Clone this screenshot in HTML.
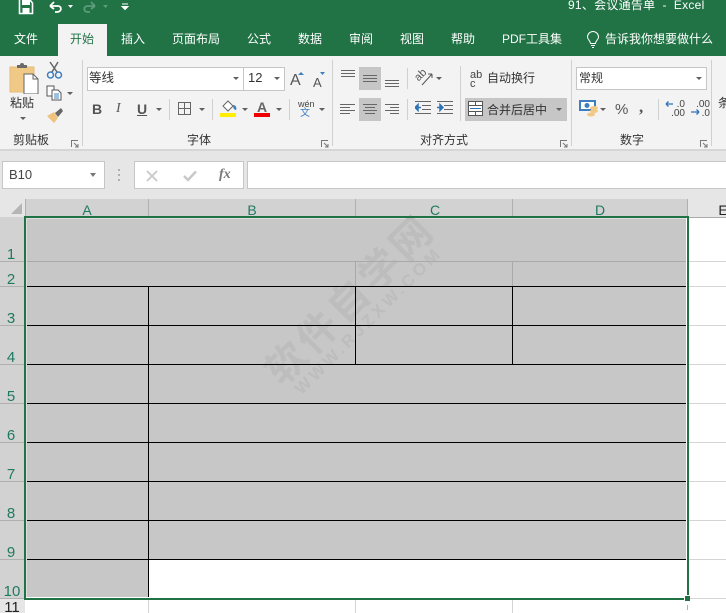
<!DOCTYPE html>
<html><head><meta charset="utf-8">
<style>
html,body{margin:0;padding:0;width:726px;height:613px;overflow:hidden;background:#fff}
body{position:relative;font-family:"Liberation Sans","Noto Sans CJK SC",sans-serif;color:#333}
div,span,svg{position:absolute}
.t{white-space:nowrap;line-height:1}
.tab{top:32px;font-size:12px;color:#fff;white-space:nowrap;line-height:14px}
.arr{width:0;height:0;border-left:3px solid transparent;border-right:3px solid transparent;border-top:3px solid #5f5f5f}
.sep{width:1px;background:#d0d0d0}
.gl{font-size:12px;color:#333;white-space:nowrap;line-height:14px}
.hd{font-size:15px;color:#1f7a60;line-height:16px;text-align:center;white-space:nowrap}
.k{background:#000}
</style></head>
<body>
<!-- title bar -->
<div style="left:0;top:0;width:726px;height:56px;background:#217346"></div>
<svg style="left:18px;top:0" width="120" height="16" viewBox="0 0 120 16" fill="none">
<path d="M1.500 0V13.500H14.500V3L12 0" stroke="#fff" stroke-width="1.600"/><rect x="4" y="0" width="8" height="5" fill="#fff"/><rect x="4.500" y="8" width="7" height="5" fill="#fff"/>
<path d="M32 6L36 2M32 6L36 9M32 6H40C44 6 44 12 39 12H37" stroke="#fff" stroke-width="1.800"/>
<path d="M50 5H55L52.500 8Z" fill="#fff"/>
<path d="M77 6L73 2M77 6L73 9M77 6H70C65 6 65 12 70 12H72" stroke="#5d9c7c" stroke-width="1.800"/>
<path d="M85 5H90L87.500 8Z" fill="#5d9c7c"/>
<path d="M104 4H110M104 6.500H110L107 9.500Z" stroke="#fff" stroke-width="1" fill="#fff"/>
</svg>
<div class="t" style="left:568px;top:-1px;font-size:12px;color:#fff;line-height:13px;letter-spacing:.25px">91、会议通告单&nbsp; -&nbsp; Excel</div>
<div style="left:58px;top:24px;width:49px;height:32px;background:#f3f3f3"></div>
<div class="tab" style="left:14px">文件</div>
<div class="tab" style="left:70px;color:#217346">开始</div>
<div class="tab" style="left:121px">插入</div>
<div class="tab" style="left:172px">页面布局</div>
<div class="tab" style="left:247px">公式</div>
<div class="tab" style="left:298px">数据</div>
<div class="tab" style="left:349px">审阅</div>
<div class="tab" style="left:400px">视图</div>
<div class="tab" style="left:451px">帮助</div>
<div class="tab" style="left:502px">PDF工具集</div>
<svg style="left:586px;top:31px" width="14" height="18" viewBox="0 0 14 18" fill="none" stroke="#fff" stroke-width="1"><path d="M4.500 12.500C4.500 9.500 1.500 9 1.500 6A5.500 5.500 0 0 1 12.500 6C12.500 9 9.500 9.500 9.500 12.500ZM5 14.500H9M6 16.500H8"/></svg>
<div class="tab" style="left:605px">告诉我你想要做什么</div>

<!-- ribbon -->
<div style="left:0;top:56px;width:726px;height:93px;background:#f3f3f3"></div>
<div style="left:0;top:149px;width:726px;height:2px;background:#d6d6d6"></div>
<div class="sep" style="left:82px;top:60px;height:86px"></div>
<div class="sep" style="left:332px;top:60px;height:86px"></div>
<div class="sep" style="left:571px;top:60px;height:86px"></div>
<div class="sep" style="left:711px;top:60px;height:86px"></div>

<!-- clipboard -->
<svg style="left:9px;top:62px" width="32" height="32" viewBox="0 0 32 32">
<path d="M1 5H25V30H1Z" fill="#f0c987" stroke="#e6bb75" stroke-width="1"/>
<path d="M8 6V3H11A2 2 0 0 1 15 3H18V6Z" fill="#6a6a6a"/>
<path d="M15 12H24L29 17V32H15Z" fill="#fff" stroke="#666" stroke-width="1"/><path d="M24 12V17H29" fill="none" stroke="#666"/>
</svg>
<div class="t" style="left:10px;top:96px;font-size:12px;line-height:14px">粘贴</div>
<div class="arr" style="left:20px;top:117px"></div>
<svg style="left:46px;top:61px" width="18" height="18" viewBox="0 0 18 18" fill="none"><path d="M4 1L11 11M12 1L6 11" stroke="#666" stroke-width="1.500"/><circle cx="4.500" cy="14" r="3" stroke="#3f7fbf" stroke-width="1.500"/><circle cx="12.500" cy="14" r="3" stroke="#3f7fbf" stroke-width="1.500"/></svg>
<svg style="left:46px;top:85px" width="16" height="16" viewBox="0 0 16 16" fill="#fff" stroke="#555" stroke-width="1"><path d="M1 1H8V11H1Z"/><path d="M6 5H12L15 8V15H6Z"/><path d="M8 9H13M8 11H13M8 13H13" stroke="#3f7fbf"/></svg>
<div class="arr" style="left:67px;top:92px"></div>
<svg style="left:46px;top:108px" width="18" height="16" viewBox="0 0 18 16"><path d="M1 8L8 4L12 10L8 15Z" fill="#efc27e"/><path d="M9 5L15 0L17 3L12 9Z" fill="#666"/></svg>
<div class="gl" style="left:13px;top:133px">剪贴板</div>
<svg style="left:71px;top:140px" width="8" height="8" viewBox="0 0 8 8" fill="none" stroke="#777"><path d="M.5 7V.5H7"/><path d="M3 3L7 7M7 4V7H4"/></svg>

<!-- font -->
<div style="left:87px;top:67px;width:156px;height:22px;background:#fff;border:1px solid #c6c6c6;box-sizing:content-box"></div>
<div style="left:243px;top:67px;width:40px;height:22px;background:#fff;border:1px solid #c6c6c6"></div>
<div class="gl" style="left:89px;top:71px;font-size:12.500px">等线</div>
<div class="arr" style="left:233px;top:77px"></div>
<div class="gl" style="left:248px;top:71px;font-size:13px">12</div>
<div class="arr" style="left:274px;top:77px"></div>
<div class="t" style="left:290px;top:73px;font-size:16px;color:#555">A</div>
<div class="t" style="left:313px;top:76px;font-size:13px;color:#555">A</div>
<svg style="left:298px;top:71px" width="28" height="6" viewBox="0 0 28 6" fill="#3f7fbf"><path d="M0 4L3 1L6 4Z"/><path d="M22 1H27L24.500 4Z"/></svg>
<div class="t" style="left:92px;top:102px;font-size:14px;font-weight:bold;color:#555">B</div>
<div class="t" style="left:116px;top:102px;font-size:14px;font-style:italic;font-family:'Liberation Serif',serif;color:#555">I</div>
<div class="t" style="left:137px;top:102px;font-size:14px;font-weight:bold;color:#555;text-decoration:underline">U</div>
<div class="arr" style="left:156px;top:108px"></div>
<div class="sep" style="left:169px;top:99px;height:21px"></div>
<svg style="left:178px;top:102px" width="13" height="13" viewBox="0 0 13 13" fill="none" stroke="#666"><path d="M.5.500H12.500V12.500H.5ZM6.500.500V12.500M.5 6.500H12.500"/></svg>
<div class="arr" style="left:199px;top:108px"></div>
<div class="sep" style="left:212px;top:99px;height:21px"></div>
<svg style="left:221px;top:100px" width="16" height="13" viewBox="0 0 16 13"><path d="M2 6L7 1L12 6L7 11Z" fill="#fff" stroke="#666"/><path d="M12 5C15 5 16 8 15 10C13 10 12 8 12 5Z" fill="#3f7fbf"/></svg>
<div style="left:220px;top:113px;width:16px;height:4px;background:#ffee00"></div>
<div class="arr" style="left:242px;top:108px"></div>
<div class="t" style="left:257px;top:100px;font-size:14px;font-weight:bold;color:#666">A</div>
<div style="left:254px;top:113px;width:16px;height:4px;background:#f00000"></div>
<div class="arr" style="left:276px;top:108px"></div>
<div class="sep" style="left:289px;top:99px;height:21px"></div>
<div class="t" style="left:298px;top:100px;font-size:9px;color:#444">wén</div>
<div class="t" style="left:300px;top:109px;font-size:10px;color:#3f7fbf">文</div>
<div class="arr" style="left:319px;top:108px"></div>
<div class="gl" style="left:187px;top:133px">字体</div>
<svg style="left:321px;top:140px" width="8" height="8" viewBox="0 0 8 8" fill="none" stroke="#777"><path d="M.5 7V.5H7"/><path d="M3 3L7 7M7 4V7H4"/></svg>

<!-- align -->
<div style="left:359px;top:67px;width:22px;height:23px;background:#c6c6c6"></div>
<div style="left:359px;top:98px;width:22px;height:23px;background:#c6c6c6"></div>
<svg style="left:340px;top:68px" width="60" height="52" viewBox="0 0 60 52" fill="none" stroke="#666">
<path d="M1 2.500H15M1 5.500H15M1 8.500H15"/>
<path d="M23 7.500H37M23 10.500H37M23 13.500H37"/>
<path d="M45 12.500H59M45 15.500H59M45 18.500H59"/>
<path d="M0 36.500H15M0 39.500H10M0 42.500H15M0 45.500H10"/>
<path d="M23 36.500H37M25 39.500H35M23 42.500H37M25 45.500H35"/>
<path d="M45 36.500H59M50 39.500H59M45 42.500H59M50 45.500H59"/>
</svg>
<div class="sep" style="left:407px;top:68px;height:21px"></div>
<div class="sep" style="left:407px;top:99px;height:21px"></div>
<div class="sep" style="left:460px;top:66px;height:55px"></div>
<div class="t" style="left:415px;top:70px;font-size:11px;color:#555;transform:rotate(-45deg);line-height:11px">ab</div>
<svg style="left:415px;top:69px" width="21" height="17" viewBox="0 0 21 17" fill="none"><path d="M7 16L17 5M17 5H13M17 5V9" stroke="#555" stroke-width="1"/></svg>
<div class="arr" style="left:436px;top:77px"></div>
<svg style="left:415px;top:101px" width="40" height="15" viewBox="0 0 40 15" fill="none"><path d="M0 .5H16M7 4.500H16M7 8.500H16M0 12.500H16" stroke="#666"/><path d="M0 6.500H6M0 6.500L3 3.500V9.500Z" stroke="#2f72b5" stroke-width="1.500" fill="#2f72b5"/><path d="M22 .5H38M29 4.500H38M29 8.500H38M22 12.500H38" stroke="#666"/><path d="M22 6.500H28M28 6.500L25 3.500V9.500Z" stroke="#2f72b5" stroke-width="1.500" fill="#2f72b5"/></svg>
<div class="t" style="left:470px;top:71px;font-size:11px;color:#444;line-height:9px">ab<br>c</div>
<div class="gl" style="left:487px;top:71px">自动换行</div>
<div style="left:465px;top:98px;width:102px;height:23px;background:#c6c6c6"></div>
<svg style="left:468px;top:101px" width="15" height="16" viewBox="0 0 15 16" fill="none"><path d="M.5.500H14.500V14.500H.5Z" fill="#fff" stroke="#555"/><path d="M.5 4.500H14.500M.5 10.500H14.500M7.500.5V4.500M7.500 10.500V14.500" stroke="#555"/><path d="M2 7.500H13" stroke="#2f72b5"/></svg>
<div class="gl" style="left:487px;top:103px">合并后居中</div>
<div class="arr" style="left:556px;top:108px"></div>
<div class="gl" style="left:420px;top:133px">对齐方式</div>
<svg style="left:560px;top:140px" width="8" height="8" viewBox="0 0 8 8" fill="none" stroke="#777"><path d="M.5 7V.5H7"/><path d="M3 3L7 7M7 4V7H4"/></svg>

<!-- number -->
<div style="left:576px;top:67px;width:129px;height:21px;background:#fff;border:1px solid #c6c6c6"></div>
<div class="gl" style="left:579px;top:71px">常规</div>
<div class="arr" style="left:696px;top:77px"></div>
<svg style="left:579px;top:100px" width="22" height="17" viewBox="0 0 22 17"><path d="M1 1H16V10H1Z" fill="#fff" stroke="#3f7fbf" stroke-width="2"/><circle cx="8" cy="5.500" r="2.500" fill="#3f7fbf"/><ellipse cx="15" cy="8" rx="4" ry="2" fill="#f0c987"/><ellipse cx="15" cy="11" rx="4" ry="2" fill="#f0c987"/><ellipse cx="12" cy="14.500" rx="4" ry="2" fill="#f0c987"/></svg>
<div class="arr" style="left:600px;top:108px"></div>
<div class="t" style="left:615px;top:102px;font-size:15px;color:#555">%</div>
<div class="t" style="left:639px;top:98px;font-size:17px;font-weight:bold;color:#555;font-family:'Liberation Serif',serif">,</div>
<div class="sep" style="left:658px;top:99px;height:21px"></div>
<div class="t" style="left:665px;top:100px;font-size:10px;line-height:9px;color:#444;width:20px;text-align:right">.0<br>.00</div>
<div class="t" style="left:690px;top:100px;font-size:10px;line-height:9px;color:#444;width:20px;text-align:right">.00<br>.0</div>
<svg style="left:665px;top:101px" width="40" height="14" viewBox="0 0 40 14" fill="none" stroke="#2f72b5" stroke-width="1.300"><path d="M1 3H8M1 3L3.500 .5M1 3L3.500 5.500"/><path d="M26 11H34M34 11L31.500 8.500M34 11L31.500 13.500"/></svg>
<div class="gl" style="left:620px;top:133px">数字</div>
<svg style="left:700px;top:140px" width="8" height="8" viewBox="0 0 8 8" fill="none" stroke="#777"><path d="M.5 7V.5H7"/><path d="M3 3L7 7M7 4V7H4"/></svg>
<div class="gl" style="left:718px;top:96px">条</div>

<!-- formula bar -->
<div style="left:0;top:151px;width:726px;height:48px;background:#e6e6e6"></div>
<div style="left:2px;top:161px;width:101px;height:26px;background:#fff;border:1px solid #c6c6c6"></div>
<div class="t" style="left:9px;top:168px;font-size:13px;line-height:14px;color:#444">B10</div>
<div style="left:90px;top:173px;width:0;height:0;border-left:3.500px solid transparent;border-right:3.500px solid transparent;border-top:4px solid #777"></div>
<svg style="left:117px;top:169px" width="4" height="13" fill="#b0b0b0"><rect x="1" y="0" width="2" height="2"/><rect x="1" y="5" width="2" height="2"/><rect x="1" y="10" width="2" height="2"/></svg>
<div style="left:134px;top:161px;width:108px;height:26px;background:#fff;border:1px solid #c6c6c6"></div>
<svg style="left:146px;top:170px" width="56" height="12" viewBox="0 0 56 12" fill="none" stroke="#c8c8c8" stroke-width="1.800"><path d="M1 1L11 11M11 1L1 11"/><path d="M38 6L42 10L50 1.500" stroke-width="2.500"/></svg>
<div class="t" style="left:219px;top:168px;font-family:'Liberation Serif',serif;font-style:italic;font-weight:bold;font-size:14px;line-height:14px;color:#777">fx</div>
<div style="left:247px;top:161px;width:479px;height:26px;background:#fff;border:1px solid #c6c6c6;border-right:none"></div>

<!-- headers -->
<div style="left:0;top:199px;width:726px;height:18px;background:#e6e6e6"></div>
<div style="left:25px;top:199px;width:663px;height:18px;background:#d2d2d2"></div>
<div style="left:0;top:217px;width:25px;height:396px;background:#d2d2d2"></div>
<div style="left:0;top:599px;width:25px;height:14px;background:#e6e6e6"></div>
<div style="left:0;top:199px;width:25px;height:18px;background:#e6e6e6"></div>
<div style="left:11px;top:203px;width:0;height:0;border-left:11px solid transparent;border-bottom:11px solid #b5b5b5"></div>
<div style="left:25px;top:199px;width:1px;height:18px;background:#b0b0b0"></div>
<div style="left:148px;top:199px;width:1px;height:18px;background:#b0b0b0"></div>
<div style="left:355px;top:199px;width:1px;height:18px;background:#b0b0b0"></div>
<div style="left:512px;top:199px;width:1px;height:18px;background:#b0b0b0"></div>
<div style="left:687px;top:199px;width:1px;height:18px;background:#b0b0b0"></div>
<div style="left:688px;top:217px;width:38px;height:1px;background:#ababab"></div>
<div class="hd" style="left:26px;top:202px;width:122px;font-size:14px">A</div>
<div class="hd" style="left:149px;top:202px;width:206px;font-size:14px">B</div>
<div class="hd" style="left:356px;top:202px;width:158px;font-size:14px">C</div>
<div class="hd" style="left:513px;top:202px;width:174px;font-size:14px">D</div>
<div class="hd" style="left:716px;top:202px;width:14px;font-size:14px;color:#222">E</div>

<div class="hd" style="left:0;top:247px;width:22px">1</div>
<div class="hd" style="left:0;top:272px;width:22px">2</div>
<div class="hd" style="left:0;top:311px;width:22px">3</div>
<div class="hd" style="left:0;top:350px;width:22px">4</div>
<div class="hd" style="left:0;top:389px;width:22px">5</div>
<div class="hd" style="left:0;top:428px;width:22px">6</div>
<div class="hd" style="left:0;top:467px;width:22px">7</div>
<div class="hd" style="left:0;top:506px;width:22px">8</div>
<div class="hd" style="left:0;top:545px;width:22px">9</div>
<div class="hd" style="left:2px;top:584px;width:20px">10</div>
<div class="hd" style="left:2px;top:600px;width:20px;color:#222">11</div>
<div style="left:0;top:261px;width:25px;height:1px;background:#b0b0b0"></div>
<div style="left:0;top:286px;width:25px;height:1px;background:#b0b0b0"></div>
<div style="left:0;top:325px;width:25px;height:1px;background:#b0b0b0"></div>
<div style="left:0;top:364px;width:25px;height:1px;background:#b0b0b0"></div>
<div style="left:0;top:403px;width:25px;height:1px;background:#b0b0b0"></div>
<div style="left:0;top:442px;width:25px;height:1px;background:#b0b0b0"></div>
<div style="left:0;top:481px;width:25px;height:1px;background:#b0b0b0"></div>
<div style="left:0;top:520px;width:25px;height:1px;background:#b0b0b0"></div>
<div style="left:0;top:559px;width:25px;height:1px;background:#b0b0b0"></div>
<div style="left:0;top:598px;width:25px;height:1px;background:#b0b0b0"></div>

<!-- right-side gridlines -->
<div style="left:689px;top:261px;width:37px;height:1px;background:#d4d4d4"></div>
<div style="left:689px;top:286px;width:37px;height:1px;background:#d4d4d4"></div>
<div style="left:689px;top:325px;width:37px;height:1px;background:#d4d4d4"></div>
<div style="left:689px;top:364px;width:37px;height:1px;background:#d4d4d4"></div>
<div style="left:689px;top:403px;width:37px;height:1px;background:#d4d4d4"></div>
<div style="left:689px;top:442px;width:37px;height:1px;background:#d4d4d4"></div>
<div style="left:689px;top:481px;width:37px;height:1px;background:#d4d4d4"></div>
<div style="left:689px;top:520px;width:37px;height:1px;background:#d4d4d4"></div>
<div style="left:689px;top:559px;width:37px;height:1px;background:#d4d4d4"></div>
<div style="left:690px;top:598px;width:36px;height:1px;background:#d4d4d4"></div>
<div style="left:148px;top:600px;width:1px;height:13px;background:#d4d4d4"></div>
<div style="left:355px;top:600px;width:1px;height:13px;background:#d4d4d4"></div>
<div style="left:512px;top:600px;width:1px;height:13px;background:#d4d4d4"></div>
<div style="left:687px;top:605px;width:1px;height:5px;background:#b0b0b0"></div>

<!-- grey fill -->
<div style="left:26px;top:218px;width:660px;height:341px;background:#dedede"></div>
<div style="left:26px;top:559px;width:122px;height:38px;background:#dedede"></div>
<div style="left:27px;top:219px;width:659px;height:340px;background:#c7c7c7"></div>
<div style="left:27px;top:559px;width:121px;height:38px;background:#c7c7c7"></div>

<!-- watermark -->
<div class="t" style="left:273px;top:358px;font-size:40px;letter-spacing:4px;color:#bdbdbd;font-weight:bold;transform:rotate(-45deg);transform-origin:0 50%;line-height:40px">软件自学网</div>
<div class="t" style="left:298px;top:383px;font-size:17px;letter-spacing:3.500px;color:#bdbdbd;font-weight:bold;transform:rotate(-45deg);transform-origin:0 50%;line-height:18px">WWW.RJZXW.COM</div>

<!-- cell lines -->
<div style="left:27px;top:261px;width:659px;height:1px;background:#a9a9a9"></div>
<div style="left:355px;top:262px;width:1px;height:24px;background:#a9a9a9"></div>
<div style="left:512px;top:262px;width:1px;height:24px;background:#a9a9a9"></div>
<div class="k" style="left:27px;top:286px;width:659px;height:1px"></div>
<div class="k" style="left:27px;top:325px;width:659px;height:1px"></div>
<div class="k" style="left:27px;top:364px;width:659px;height:1px"></div>
<div class="k" style="left:27px;top:403px;width:659px;height:1px"></div>
<div class="k" style="left:27px;top:442px;width:659px;height:1px"></div>
<div class="k" style="left:27px;top:481px;width:659px;height:1px"></div>
<div class="k" style="left:27px;top:520px;width:659px;height:1px"></div>
<div class="k" style="left:27px;top:559px;width:659px;height:1px"></div>
<div class="k" style="left:148px;top:286px;width:1px;height:311px"></div>
<div class="k" style="left:355px;top:286px;width:1px;height:78px"></div>
<div class="k" style="left:512px;top:286px;width:1px;height:78px"></div>

<!-- selection -->
<div style="left:24px;top:216px;width:2px;height:384px;background:#217346"></div>
<div style="left:24px;top:216px;width:665px;height:2px;background:#217346"></div>
<div style="left:687px;top:216px;width:2px;height:379px;background:#217346"></div>
<div style="left:24px;top:598px;width:660px;height:2px;background:#217346"></div>
<div style="left:685px;top:596px;width:5px;height:5px;background:#217346"></div>
</body></html>
